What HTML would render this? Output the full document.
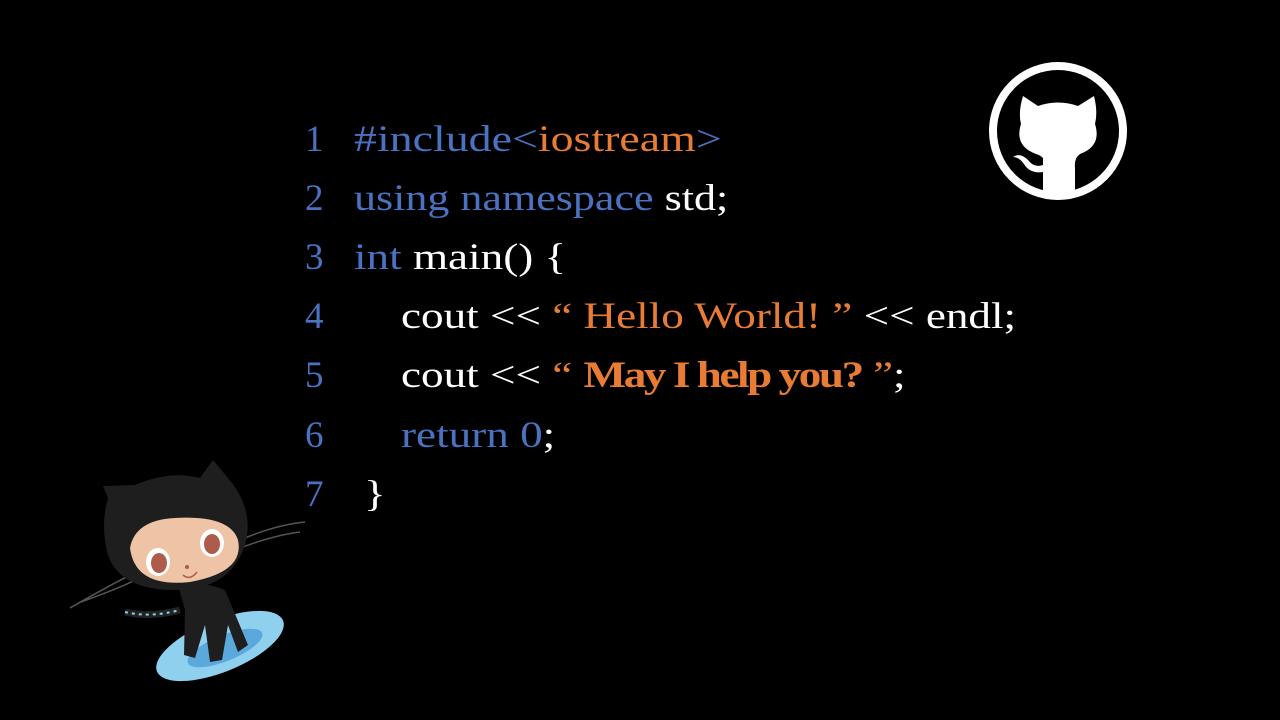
<!DOCTYPE html>
<html><head><meta charset="utf-8"><style>
html,body{margin:0;padding:0;background:#000;}
body{width:1280px;height:720px;position:relative;overflow:hidden;font-family:"Liberation Serif",serif;}
.l{position:absolute;font-size:37px;white-space:pre;color:#fff;line-height:1;transform:scaleX(1.22);transform-origin:0 0;}
.b{color:#4a72c0}.o{color:#e87c35}.w{color:#fff}
.n{position:absolute;left:305px;font-size:37px;color:#4a72c0;line-height:1;}
</style></head><body>
<div class="n" style="top:121px">1</div>
<div class="n" style="top:180px">2</div>
<div class="n" style="top:239px">3</div>
<div class="n" style="top:298px">4</div>
<div class="n" style="top:357px">5</div>
<div class="n" style="top:417px">6</div>
<div class="n" style="top:476px">7</div>
<div class="l" style="left:354px;top:121px;transform:scaleX(1.24)"><span class="b">#include&lt;</span><span class="o">iostream</span><span class="b">&gt;</span></div>
<div class="l" style="left:354px;top:180px;transform:scaleX(1.19)"><span class="b">using namespace</span> std;</div>
<div class="l" style="left:354px;top:239px"><span class="b">int</span> main() {</div>
<div class="l" style="left:401px;top:298px">cout &lt;&lt; <span class="o">“ Hello World! ”</span> &lt;&lt; endl;</div>
<div class="l" style="left:401px;top:357px">cout &lt;&lt; <span class="o">“ <b style="letter-spacing:-2px">May I help you?</b> ”</span>;</div>
<div class="l" style="left:401px;top:417px"><span class="b">return 0</span>;</div>
<div class="l" style="left:364px;top:476px">}</div>

<svg style="position:absolute;left:0;top:0" width="1280" height="720">
<circle cx="1058" cy="131" r="65" fill="none" stroke="#fff" stroke-width="8"/>
<path fill="#fff" d="M1023 96 L1038 106 Q1058 99 1078 106 L1094 96 Q1098 112 1095 124 Q1102 146 1080 154 Q1074 158 1075 168 L1075 194 Q1058 198 1043 194 L1043 172 Q1030 174 1024 164 Q1019 157 1013 157 Q1020 152 1028 160 Q1034 168 1043 165 L1043 158 Q1040 155 1036 154 Q1014 146 1021 124 Q1018 112 1023 96Z"/>

<path d="M70 608 Q110 585 140 570 M78 603 Q115 590 140 578" stroke="#555" stroke-width="1.5" fill="none"/>
<path d="M240 540 Q275 525 305 522 M240 548 Q275 535 300 532" stroke="#555" stroke-width="1.5" fill="none"/>
<ellipse cx="220" cy="646" rx="68" ry="26" transform="rotate(-22 220 646)" fill="#8fd0ee"/>
<ellipse cx="225" cy="648" rx="40" ry="13" transform="rotate(-22 225 648)" fill="#5aa8dc"/>
<path d="M125 612 Q150 618 180 610" stroke="#222" stroke-width="7" fill="none"/>
<path d="M125 612 Q150 618 180 610" stroke="#8fd0ee" stroke-width="2" stroke-dasharray="3 4" fill="none"/>
<path d="M178 585 Q200 580 225 590 L248 645 L238 652 L228 625 L222 660 L210 662 L205 625 L195 658 L184 655 L185 610 Z" fill="#1e1e1e"/>
<path d="M108 498 L103 486 L135 485 Q170 470 200 478 L213 460 L228 478 Q255 510 245 545 Q230 590 175 590 Q120 590 108 555 Q100 525 108 498Z" fill="#1e1e1e"/>
<path d="M130 548 Q135 520 175 518 Q230 515 238 540 Q245 572 190 582 Q135 588 130 548Z" fill="#efc4a6"/>
<ellipse cx="158" cy="562" rx="12" ry="14" fill="#fff"/>
<ellipse cx="212" cy="543" rx="12" ry="14" fill="#fff"/>
<ellipse cx="159" cy="563" rx="8" ry="10" fill="#ad5c4c"/>
<ellipse cx="212" cy="544" rx="8" ry="10" fill="#ad5c4c"/>
<circle cx="187" cy="567" r="2" fill="#ad5c4c"/>
<path d="M183 575 Q190 581 197 572" stroke="#ad5c4c" stroke-width="1.5" fill="none"/>
</svg>
</body></html>
